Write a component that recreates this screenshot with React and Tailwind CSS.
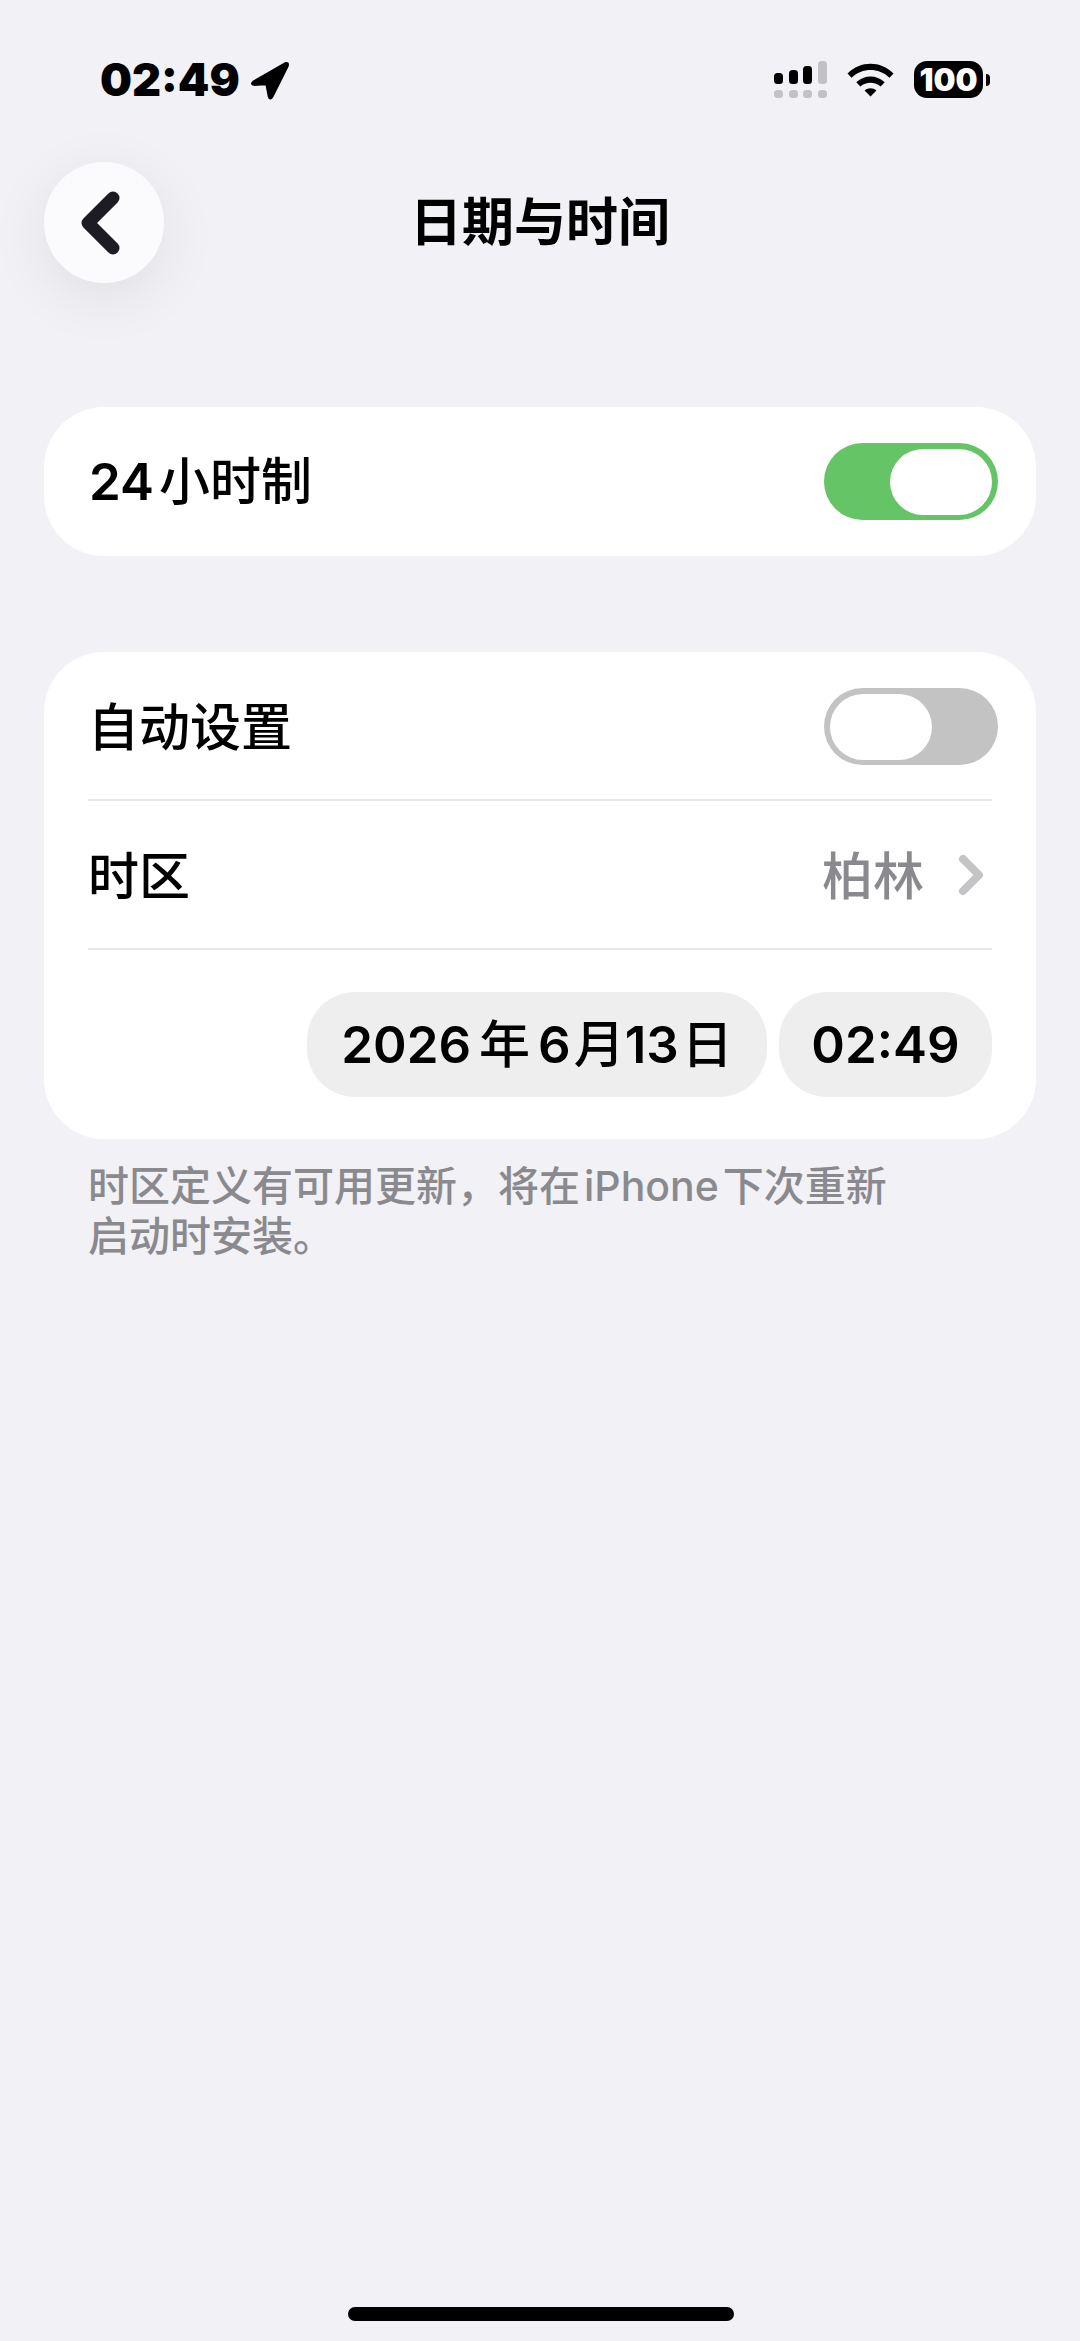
const font = { fontFamily: '"Inter", "Noto Sans CJK SC", sans-serif' };

function Signal() {
  return (
    <svg width="53" height="37" viewBox="0 0 53 37" className="block">
      <rect x="0" y="12" width="9" height="11" rx="3.5" fill="#000" />
      <rect x="15" y="9" width="9" height="14" rx="3.5" fill="#000" />
      <rect x="29" y="5" width="9" height="18" rx="3.5" fill="#000" />
      <rect x="44" y="0" width="9" height="23" rx="3.5" fill="#c2c2c5" />
      <rect x="0" y="29" width="9" height="8" rx="3.5" fill="#c2c2c5" />
      <rect x="15" y="29" width="9" height="8" rx="3.5" fill="#c2c2c5" />
      <rect x="29" y="29" width="9" height="8" rx="3.5" fill="#c2c2c5" />
      <rect x="44" y="29" width="9" height="8" rx="3.5" fill="#c2c2c5" />
    </svg>
  );
}

function Wifi() {
  return (
    <svg width="47" height="35" viewBox="0 0 47 35" className="block">
      <path d="M0.5 11.5 C13.5 -1.5 33.5 -1.5 46.5 11.5 L42.5 15.8 C31.5 5.5 15.5 5.5 4.5 15.8 Z" fill="#000" />
      <path d="M9.3 20.2 C17.5 12.6 29.5 12.6 37.7 20.2 L33.6 24.4 C28 19.4 19 19.4 13.4 24.4 Z" fill="#000" />
      <path d="M17.6 28.4 C21 25.5 26 25.5 29.4 28.4 L23.5 34.6 Z" fill="#000" />
    </svg>
  );
}

function Toggle({ on }) {
  return (
    <div className={`flex h-[77px] w-[174px] items-center rounded-full px-[6px] ${on ? "justify-end bg-[#65c466]" : "justify-start bg-[#c3c3c3]"}`}>
      <div className="h-[66px] w-[102px] rounded-full bg-white" />
    </div>
  );
}

export default function App() {
  return (
    <div style={font} className="relative flex h-[2341px] w-[1080px] flex-col overflow-hidden bg-[#f1f1f6] text-black">
      {/* status bar */}
      <div className="flex h-[162px] items-start justify-between pl-[100px] pr-[90px] pt-[56px]">
        <div className="flex items-center gap-[11px]">
          <span className="text-[45px] leading-[48px] font-black">02:49</span>
          <svg width="38" height="39" viewBox="0 0 37 38" className="block">
            <path d="M2 20 L33 2 Q37 0.5 36 5 L21 35 Q18.5 39 17 34.5 L15 24 Q14.8 23 13.5 22.8 L3 23.5 Q-1 22.5 2 20 Z" fill="#000" stroke="#000" strokeWidth="1.5" strokeLinejoin="round" />
          </svg>
        </div>
        <div className="flex items-center gap-[20px] pt-[5px]">
          <Signal />
          <Wifi />
          <div className="flex items-center gap-[3px]">
            <div className="flex h-[37px] w-[69px] items-center justify-center rounded-[13px] bg-black text-[31px] leading-none font-black text-white">100</div>
            <div className="h-[12px] w-[4px] rounded-r-full bg-black" />
          </div>
        </div>
      </div>

      {/* nav */}
      <div className="relative flex h-[121px] items-center justify-center">
        <div className="absolute left-[44px] top-0 flex h-[121px] w-[120px] items-center justify-center rounded-full bg-[#fbfbfe] shadow-[0_14px_60px_rgba(0,0,0,0.08)]">
          <svg width="44" height="66" viewBox="0 0 44 66" className="block -translate-x-[3px]">
            <path d="M34 8 L9 33 L34 58" fill="none" stroke="#1c1c22" strokeWidth="13" strokeLinecap="round" strokeLinejoin="round" />
          </svg>
        </div>
        <h1 className="text-[52px] leading-[60px] font-bold">日期与时间</h1>
      </div>

      {/* content */}
      <div className="flex flex-col px-[44px] pt-[124px]">
        <div className="flex h-[149px] items-center justify-between rounded-[60px] bg-white pl-[45px] pr-[38px]">
          <span className="text-[51px] leading-[60px] font-medium"><span className="font-semibold">24</span><span className="ml-[5px]">小时制</span></span>
          <Toggle on />
        </div>

        <div className="mt-[96px] flex h-[487px] flex-col rounded-[60px] bg-white px-[44px]">
          <div className="flex h-[149px] items-center justify-between border-b-2 border-[#e8e8ea]">
            <span className="translate-y-[2px] text-[51px] leading-[60px] font-medium">自动设置</span>
            <div className="-mr-[6px] translate-y-[1px]"><Toggle /></div>
          </div>
          <div className="flex h-[149px] items-center justify-between border-b-2 border-[#e8e8ea]">
            <span className="translate-y-[2px] text-[51px] leading-[60px] font-medium">时区</span>
            <div className="flex items-center gap-[36px]">
              <span className="translate-y-[2px] text-[51px] leading-[60px] font-medium text-[#8a8a8e]">柏林</span>
              <svg width="28" height="42" viewBox="0 0 28 42" className="mr-[4px] block -translate-x-[3px]">
                <path d="M6 5 L22 21 L6 37" fill="none" stroke="#c4c4c7" strokeWidth="8" strokeLinecap="round" strokeLinejoin="round" />
              </svg>
            </div>
          </div>
          <div className="flex justify-end gap-[12px] pt-[42px]">
            <div className="flex h-[105px] w-[460px] items-center justify-center rounded-[48px] bg-[#eeeeef] text-[51px] leading-[60px] font-medium">
              <span className="font-semibold">2026</span><span className="mx-[8px]">年</span><span className="font-semibold">6</span><span className="ml-[3px]">月</span><span className="font-semibold">13</span><span className="ml-[3px]">日</span>
            </div>
            <div className="flex h-[105px] w-[213px] items-center justify-center rounded-[48px] bg-[#eeeeef] text-[51px] leading-[60px] font-semibold">02:49</div>
          </div>
        </div>

        <p className="mt-[22px] pl-[44px] text-[41px] leading-[50px] font-medium text-[#8a8a8e]">
          <span className="block">时区定义有可用更新，将在<span className="mx-[4px]">iPhone</span>下次重新</span>
          <span className="block">启动时安装。</span>
        </p>
      </div>

      <div className="absolute bottom-[20px] left-[348px] h-[14px] w-[386px] rounded-full bg-black" />
    </div>
  );
}
